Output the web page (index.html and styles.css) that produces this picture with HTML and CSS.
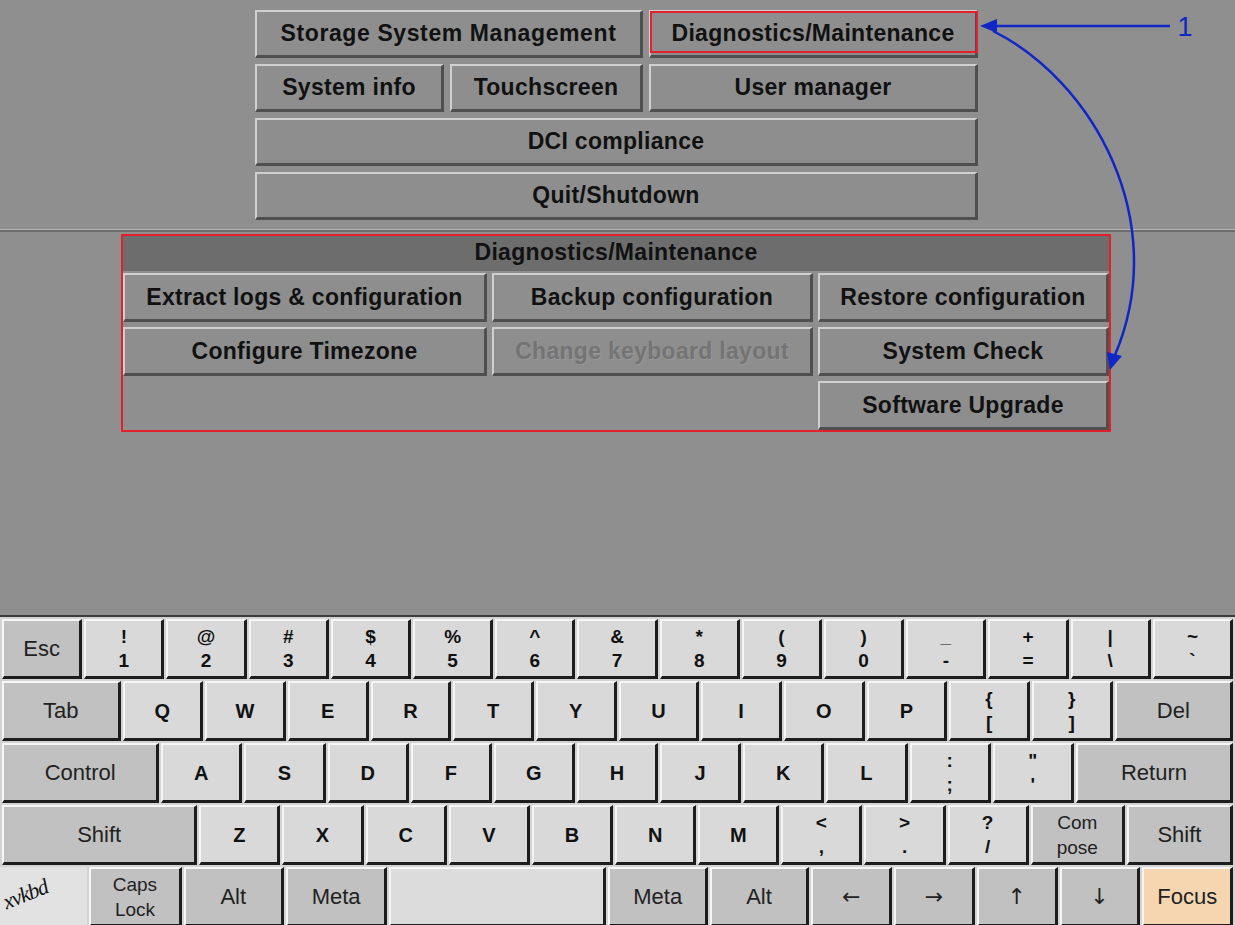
FILE: index.html
```html
<!DOCTYPE html>
<html lang="en">
<head>
<meta charset="utf-8">
<title>Diagnostics/Maintenance</title>
<link rel="stylesheet" href="styles.css">
</head>
<body>
<div class="screen">
  <section class="top-panel">
    <nav class="menu">
      <div class="btn span2">Storage System Management</div>
      <div class="btn marked">Diagnostics/Maintenance</div>
      <div class="btn">System info</div>
      <div class="btn">Touchscreen</div>
      <div class="btn">User manager</div>
      <div class="btn span3">DCI compliance</div>
      <div class="btn span3">Quit/Shutdown</div>
    </nav>
  </section>

  <section class="lower-panel">
    <div class="diag">
      <div class="diag-title">Diagnostics/Maintenance</div>
      <div class="diag-grid">
        <div class="btn">Extract logs &amp; configuration</div>
        <div class="btn">Backup configuration</div>
        <div class="btn">Restore configuration</div>
        <div class="btn">Configure Timezone</div>
        <div class="btn disabled">Change keyboard layout</div>
        <div class="btn">System Check</div>
        <div class="btn col3">Software Upgrade</div>
      </div>
    </div>
  </section>

  <section class="keyboard">
    <div class="krow">
      <div class="key mod">Esc</div>
      <div class="key"><span>!</span><span>1</span></div>
      <div class="key"><span>@</span><span>2</span></div>
      <div class="key"><span>#</span><span>3</span></div>
      <div class="key"><span>$</span><span>4</span></div>
      <div class="key"><span>%</span><span>5</span></div>
      <div class="key"><span>^</span><span>6</span></div>
      <div class="key"><span>&amp;</span><span>7</span></div>
      <div class="key"><span>*</span><span>8</span></div>
      <div class="key"><span>(</span><span>9</span></div>
      <div class="key"><span>)</span><span>0</span></div>
      <div class="key"><span>_</span><span>-</span></div>
      <div class="key"><span>+</span><span>=</span></div>
      <div class="key"><span>|</span><span>\</span></div>
      <div class="key"><span>~</span><span>`</span></div>
    </div>
    <div class="krow">
      <div class="key mod u15">Tab</div>
      <div class="key">Q</div>
      <div class="key">W</div>
      <div class="key">E</div>
      <div class="key">R</div>
      <div class="key">T</div>
      <div class="key">Y</div>
      <div class="key">U</div>
      <div class="key">I</div>
      <div class="key">O</div>
      <div class="key">P</div>
      <div class="key"><span>{</span><span>[</span></div>
      <div class="key"><span>}</span><span>]</span></div>
      <div class="key mod u15">Del</div>
    </div>
    <div class="krow">
      <div class="key mod u2">Control</div>
      <div class="key">A</div>
      <div class="key">S</div>
      <div class="key">D</div>
      <div class="key">F</div>
      <div class="key">G</div>
      <div class="key">H</div>
      <div class="key">J</div>
      <div class="key">K</div>
      <div class="key">L</div>
      <div class="key"><span>:</span><span>;</span></div>
      <div class="key"><span>"</span><span>'</span></div>
      <div class="key mod u2">Return</div>
    </div>
    <div class="krow">
      <div class="key mod u25">Shift</div>
      <div class="key">Z</div>
      <div class="key">X</div>
      <div class="key">C</div>
      <div class="key">V</div>
      <div class="key">B</div>
      <div class="key">N</div>
      <div class="key">M</div>
      <div class="key"><span>&lt;</span><span>,</span></div>
      <div class="key"><span>&gt;</span><span>.</span></div>
      <div class="key"><span>?</span><span>/</span></div>
      <div class="key mod small u117"><span>Com</span><span>pose</span></div>
      <div class="key mod u133">Shift</div>
    </div>
    <div class="krow">
      <div class="logo"><span>xvkbd</span></div>
      <div class="key mod small u115"><span>Caps</span><span>Lock</span></div>
      <div class="key mod u126">Alt</div>
      <div class="key mod u127">Meta</div>
      <div class="key space"></div>
      <div class="key mod u124">Meta</div>
      <div class="key mod u124">Alt</div>
      <div class="key mod arrow">&#8592;</div>
      <div class="key mod arrow">&#8594;</div>
      <div class="key mod arrow">&#8593;</div>
      <div class="key mod arrow">&#8595;</div>
      <div class="key mod focus u113">Focus</div>
    </div>
  </section>

  <svg class="callout" width="1235" height="925" viewBox="0 0 1235 925">
    <line x1="1170" y1="26" x2="994" y2="26" />
    <polygon points="980,26 997,19 997,33" />
    <path d="M 993 31 C 1092 80 1172 220 1115 355" />
    <polygon points="1110,370 1122,356 1107,352" />
    <text x="1185" y="36">1</text>
  </svg>
</div>
</body>
</html>
```

FILE: styles.css
```css
* {
  box-sizing: border-box;
}

html,
body {
  margin: 0;
  padding: 0;
}

body {
  width: 1235px;
  height: 925px;
  overflow: hidden;
  background: #8f8f8f;
  font-family: "Liberation Sans", Arial, sans-serif;
  color: #111;
}

.screen {
  position: relative;
  width: 1235px;
  height: 925px;
  display: flex;
  flex-direction: column;
}

/* ---- main menu ---- */
.top-panel {
  flex: none;
  height: 230px;
  border-bottom: 1px solid #b5b5b5;
}

.menu {
  margin-left: 255px;
  width: 723px;
  padding-top: 10px;
  display: grid;
  grid-template-columns: 189px 193px 329px;
  grid-auto-rows: 48px;
  gap: 6px;
}

.btn {
  position: relative;
  display: flex;
  align-items: center;
  justify-content: center;
  background: #8e8e8e;
  border-style: solid;
  border-width: 2px 3px 3px 2px;
  border-color: #d0d0d0 #4f4f4f #4f4f4f #d0d0d0;
  font-weight: bold;
  font-size: 23px;
  letter-spacing: 0.3px;
  white-space: nowrap;
}

.span2 {
  grid-column: span 2;
  letter-spacing: 0.6px;
}

.span3 {
  grid-column: span 3;
}

.col3 {
  grid-column: 3;
}

.marked::after {
  content: "";
  position: absolute;
  left: -1px;
  top: -1px;
  right: -3px;
  bottom: 2px;
  border: 2px solid #e3212c;
}

.btn.disabled {
  color: #747474;
  text-shadow: 1px 1px 0 #989898;
}

/* ---- diagnostics sub menu ---- */
.lower-panel {
  flex: none;
  height: 387px;
  border-top: 2px solid #6c6c6c;
  border-bottom: 2px solid #3c3c3c;
  padding-top: 2px;
}

.diag {
  margin-left: 121px;
  width: 990px;
  height: 198px;
  border: 2px solid #e3212c;
  display: flex;
  flex-direction: column;
}

.diag-title {
  flex: none;
  height: 35px;
  padding-bottom: 3px;
  background: #6d6d6d;
  display: flex;
  align-items: center;
  justify-content: center;
  font-weight: bold;
  font-size: 23px;
  letter-spacing: 0.3px;
}

.diag-grid {
  padding-top: 2px;
  display: grid;
  grid-template-columns: 364px 321px 291px;
  grid-auto-rows: 49px;
  gap: 5px;
}

/* ---- on-screen keyboard ---- */
.keyboard {
  flex: 1;
  background: #d3d3d3;
  padding: 2px 2px 0 2px;
  display: flex;
  flex-direction: column;
  gap: 2px;
}

.krow {
  flex: none;
  height: 60px;
  display: flex;
  gap: 2px;
}

.key {
  flex: 1 1 0;
  min-width: 0;
  display: flex;
  flex-direction: column;
  align-items: center;
  justify-content: center;
  background: #d9d9d9;
  border-style: solid;
  border-width: 2px 3px 3px 2px;
  border-color: #f6f6f6 #1d1d1d #1d1d1d #f6f6f6;
  font-size: 20px;
  font-weight: bold;
  line-height: 24px;
  white-space: nowrap;
}

.key span {
  display: block;
  font-size: 19px;
}

.key.mod {
  background: #c1c1c1;
  font-weight: normal;
  font-size: 22px;
  color: #222;
}

.key.small span {
  font-size: 19px;
  line-height: 25px;
}

.key.arrow {
  font-family: "DejaVu Sans", sans-serif;
  font-size: 22px;
}

.key.space {
  flex-grow: 2.8;
  background: #dcdcdc;
}

.key.focus {
  background: #f6d6b1;
}

.logo {
  flex: 1.1 1 0;
  margin-left: -2px;
  background: #e2e2e2;
  display: flex;
  align-items: flex-start;
  padding: 16px 0 0 4px;
  overflow: hidden;
}

.logo span {
  display: block;
  font-family: "Liberation Serif", serif;
  font-style: italic;
  font-size: 22px;
  line-height: 24px;
  letter-spacing: -1px;
  transform: rotate(-22deg);
  transform-origin: left center;
  margin-top: 8px;
  color: #111;
}

.u113 { flex-grow: 1.13; }
.u115 { flex-grow: 1.15; }
.u117 { flex-grow: 1.17; }
.u124 { flex-grow: 1.245; }
.u126 { flex-grow: 1.26; }
.u127 { flex-grow: 1.27; }
.u133 { flex-grow: 1.33; }
.u15 { flex-grow: 1.5; }
.u2 { flex-grow: 2; }
.u25 { flex-grow: 2.5; }

/* ---- numbered callout arrows ---- */
.callout {
  position: absolute;
  left: 0;
  top: 0;
  pointer-events: none;
}

.callout line,
.callout path {
  fill: none;
  stroke: #1026c6;
  stroke-width: 2.5;
}

.callout polygon {
  fill: #1026c6;
}

.callout text {
  fill: #1026c6;
  font-family: "Liberation Sans", Arial, sans-serif;
  font-size: 27px;
  text-anchor: middle;
}
```
